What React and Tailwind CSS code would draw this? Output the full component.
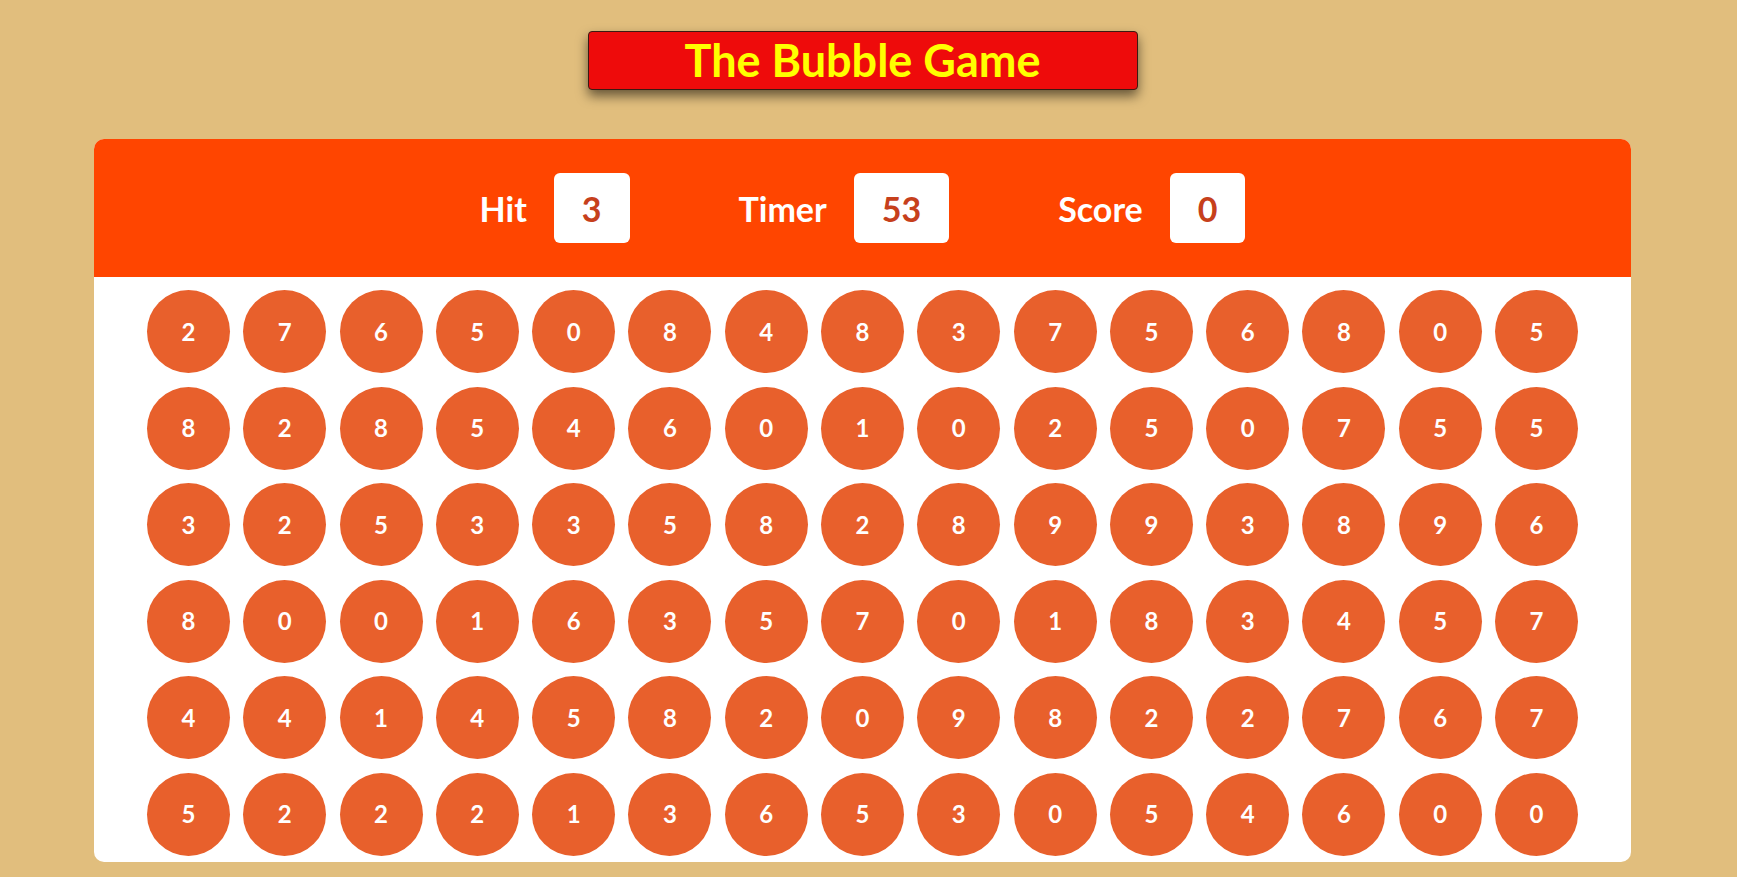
import React from "react";

// 6 x 15 grid of bubble numbers, row by row
const ROWS = [
  "276508483756805",
  "828546010250755",
  "325335828993896",
  "800163570183457",
  "441458209822767",
  "522213653054600",
];

function Stat({ label, value }) {
  return (
    <div className="flex items-center gap-[27px]">
      <span className="text-[34px] font-bold text-white">{label}</span>
      <span className="flex h-[70px] items-center justify-center rounded-[6px] bg-white px-[28px] text-[34px] font-bold text-[#c6401c]">
        {value}
      </span>
    </div>
  );
}

export default function App() {
  return (
    <div className="min-h-screen bg-[#e1be7d] font-['Lato','Liberation_Sans',sans-serif]">
      <div className="ml-[94px] flex w-[1537px] flex-col items-center pt-[31px] pb-[18px]">
        <h1 className="flex h-[59px] w-[550px] items-center justify-center rounded-[4px] border border-[#3b1a12] bg-[#ee0b0b] text-[45px] font-bold text-[#ffff00] shadow-[0_6px_12px_rgba(0,0,0,0.55)]">
          The Bubble Game
        </h1>

        <div className="mt-[49px] w-full overflow-hidden rounded-[10px] bg-white">
          <div className="flex h-[138px] items-center justify-center gap-[109px] bg-[#ff4500]">
            <Stat label="Hit" value="3" />
            <Stat label="Timer" value="53" />
            <Stat label="Score" value="0" />
          </div>

          <div className="flex flex-wrap justify-center gap-x-[13.3px] gap-y-[13.5px] px-[50px] pt-[13px] pb-[6px]">
            {ROWS.flatMap((row, r) =>
              row.split("").map((n, c) => (
                <div
                  key={`${r}-${c}`}
                  className="flex h-[83px] w-[83px] items-center justify-center rounded-full bg-[#e8602c] text-[24px] font-bold text-white"
                >
                  {n}
                </div>
              ))
            )}
          </div>
        </div>
      </div>
    </div>
  );
}
